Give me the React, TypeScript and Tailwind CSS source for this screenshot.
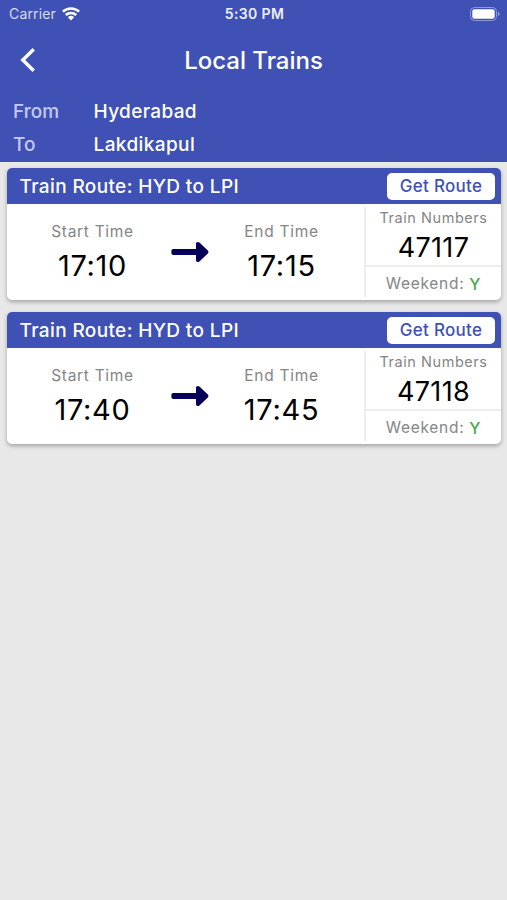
interface Train {
  number: string;
  start: string;
  end: string;
  weekend: string;
}

const trains: Train[] = [
  { number: "47117", start: "17:10", end: "17:15", weekend: "Y" },
  { number: "47118", start: "17:40", end: "17:45", weekend: "Y" },
];

function StatusBar() {
  return (
    <div className="grid h-7 grid-cols-3 items-center pl-[9px] pr-[7px] text-[14px] leading-none">
      <div className="flex items-center gap-[6px] text-[#d9dcf0]">
        <span className="tracking-[0.15px]">Carrier</span>
        <svg width="18" height="14" viewBox="0 0 18 14" className="text-white">
          <g fill="none" stroke="currentColor" strokeWidth="2.5">
            <path d="M0.9 4.700a11.6 11.6 0 0 1 16.2 0" />
            <path d="M3.8 8a7.500 7.500 0 0 1 10.400 0" />
          </g>
          <path d="M9 13.4 5.9 10.3a4.500 4.500 0 0 1 6.200 0z" fill="currentColor" />
        </svg>
      </div>
      <div className="text-center font-semibold tracking-[0.35px] text-[#eceefa]">5:30 PM</div>
      <div className="flex justify-end">
        <svg width="30" height="14" viewBox="0 0 30 14">
          <rect x="0.5" y="0.5" width="26" height="13" rx="4" fill="none" stroke="#8f99d4" />
          <rect x="2.3" y="2.3" width="22.4" height="9.4" rx="2.2" fill="#fff" />
          <path d="M28 4.800c1.100.4 1.700 1.200 1.700 2.200s-.6 1.800-1.700 2.200z" fill="#8f99d4" />
        </svg>
      </div>
    </div>
  );
}

function Header() {
  return (
    <header className="h-[162px] bg-[#3f51b5] text-white">
      <StatusBar />
      <div className="grid h-16 grid-cols-[60px_1fr_60px] items-center">
        <button className="pl-5" aria-label="Back">
          <svg width="16" height="24" viewBox="0 0 16 24" fill="none" stroke="currentColor" strokeWidth="3.4">
            <path d="M13.7 1.300 2.800 12l10.900 10.700" />
          </svg>
        </button>
        <h1 className="pt-px text-center text-[24px] font-medium">Local Trains</h1>
      </div>
      <dl className="grid grid-cols-[80px_1fr] pl-[13px] pt-[3px] text-[19px] font-medium leading-[33px]">
        <dt className="text-[#c5caf0]">From</dt>
        <dd className="pl-[0.5px] tracking-[0.35px]">Hyderabad</dd>
        <dt className="text-[#c5caf0]">To</dt>
        <dd className="pl-[0.5px] tracking-[0.4px]">Lakdikapul</dd>
      </dl>
    </header>
  );
}

function ArrowIcon() {
  return (
    <svg width="38" height="22" viewBox="0 0 38 22" fill="#06005a" className="-ml-px shrink-0">
      <path d="M2.300 8H25V3.200c0-2.200 1.900-3 3.400-1.600l8.200 7.700c1.100 1 1.100 2.400 0 3.400l-8.200 7.700c-1.500 1.400-3.400.6-3.400-1.600V14H2.300C1.100 14 .4 13.200.4 12.100V9.900C.4 8.800 1.100 8 2.300 8z" />
    </svg>
  );
}

function TimeColumn({ label, time }: { label: string; time: string }) {
  return (
    <div className="flex flex-col items-center pt-[18px]">
      <span className="text-[15.500px] leading-5 tracking-[0.7px] text-[#858585]">{label}</span>
      <span className="mt-[7px] text-[29px] leading-[34px] tracking-[0.7px]">{time}</span>
    </div>
  );
}

function TrainCard({ train }: { train: Train }) {
  return (
    <article className="h-[132px] overflow-hidden rounded-[5px] bg-white shadow-[0_2px_4px_rgba(0,0,0,0.3)]">
      <div className="flex h-9 items-center justify-between bg-[#3f51b5] pl-[12.500px] pr-[6px]">
        <h2 className="pt-[2px] text-[19px] font-medium tracking-[0.37px] text-white">Train Route: HYD to LPI</h2>
        <button className="h-[27px] w-[108px] rounded-[5px] bg-white text-[17px] font-medium leading-[27px] tracking-[0.3px] text-[#3f51b5]">
          Get Route
        </button>
      </div>
      <div className="grid h-24 grid-cols-[171px_24px_159px_1fr]">
        <TimeColumn label="Start Time" time={train.start} />
        <div className="flex items-center justify-center">
          <ArrowIcon />
        </div>
        <TimeColumn label="End Time" time={train.end} />
        <div className="ml-[3px] flex flex-col items-center py-[3px]">
          <div className="flex h-[60px] w-full flex-col items-center border-b-2 border-l-2 border-[#ededed] pt-px">
            <span className="text-[14.500px] leading-5 tracking-[0.55px] text-[#858585]">Train Numbers</span>
            <span className="mt-[4px] text-[27px] leading-8 tracking-[0.3px]">{train.number}</span>
          </div>
          <div className="flex w-full flex-1 items-center justify-center border-l-2 border-[#ededed] pt-[4px] text-[15.500px] tracking-[0.7px] text-[#858585]">
            Weekend:<span className="ml-[5px] text-[16px] font-medium leading-none text-[#43ab47]">{train.weekend}</span>
          </div>
        </div>
      </div>
    </article>
  );
}

export default function App() {
  return (
    <div className="h-[900px] w-full bg-[#e8e8e8] font-['Inter',sans-serif] text-black">
      <Header />
      <main className="flex flex-col gap-3 pl-[7px] pr-[6px] pt-[6px]">
        {trains.map((train) => (
          <TrainCard key={train.number} train={train} />
        ))}
      </main>
    </div>
  );
}
